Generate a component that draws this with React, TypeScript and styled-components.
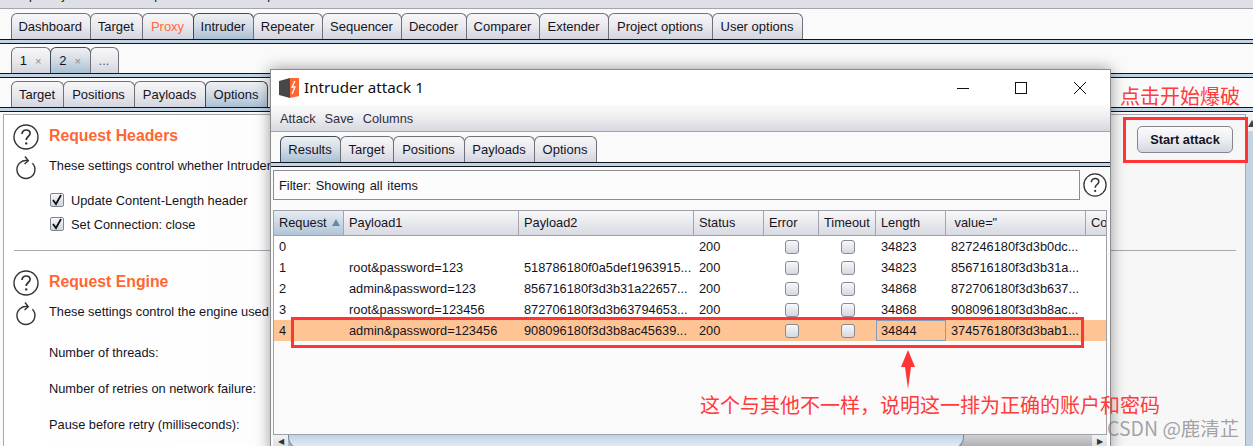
import React from "react";
import styled, { createGlobalStyle } from "styled-components";

const GlobalStyle = createGlobalStyle`
  html, body {
    margin: 0;
    padding: 0;
    background: #fafafb;
  }
  #root {
    width: 1253px;
    height: 446px;
    overflow: hidden;
  }
`;

const ui = `"Liberation Sans", Arial, sans-serif`;
const cjk = `"Noto Sans CJK SC", "Noto Sans", sans-serif`;
const ink = "#14141e";

const Page = styled.div`
  position: relative;
  width: 1253px;
  height: 446px;
  overflow: hidden;
  display: flex;
  flex-direction: column;
  font-family: ${ui};
  font-size: 12.8px;
  color: ${ink};
  background: #fafafb;
`;

const MenuStrip = styled.div`
  flex: none;
  height: 9px;
  box-sizing: border-box;
  overflow: hidden;
  display: flex;
  gap: 6px;
  padding-left: 9px;
  background: #dfe0e7;
  border-bottom: 1px solid #a4a4ac;
  line-height: 14px;
  & > span {
    margin-top: -12px;
  }
`;

const TabRow = styled.div<{ $top: number; $left?: number }>`
  flex: none;
  display: flex;
  height: 26px;
  margin-top: ${(p) => p.$top}px;
  padding-left: ${(p) => p.$left ?? 11}px;
`;

const Tab = styled.div<{ $w: number; $active?: boolean; $hot?: boolean; $muted?: boolean }>`
  flex: none;
  box-sizing: border-box;
  width: ${(p) => p.$w}px;
  height: 26px;
  display: flex;
  align-items: center;
  justify-content: center;
  gap: 8px;
  padding-right: 1px;
  font-size: 13px;
  white-space: nowrap;
  border: 1px solid #6f7078;
  border-bottom: none;
  border-radius: 6px 6px 0 0;
  margin-right: -1px;
  color: ${(p) => (p.$hot ? "#ff6a3d" : p.$muted ? "#5a5a66" : ink)};
  background: ${(p) =>
    p.$active
      ? "linear-gradient(#eef0f3 0%, #d5dde6 45%, #a9c0d4 100%)"
      : "linear-gradient(#f7f7f9 0%, #e9e9ee 50%, #d3d5de 100%)"};
  border-color: ${(p) => (p.$active ? "#3d4a58" : "#6f7078")};
`;

const CloseMark = styled.span`
  color: #8a8a92;
  font-size: 11px;
`;

const Rule = styled.div`
  flex: none;
  height: 5px;
  box-sizing: border-box;
  border-top: 1px solid #10141c;
  border-bottom: 1px solid #10141c;
  background: #c2d3e4;
`;

const Panel = styled.div`
  flex: 1;
  margin: 2px 0 0 3px;
  display: flex;
  min-height: 0;
`;

const PanelBody = styled.div`
  flex: 1;
  box-sizing: border-box;
  border: 1px solid #a8a8b0;
  border-bottom: none;
  padding: 9px 9px 0 9px;
  background: linear-gradient(90deg, #ffffff, #f6f6f7);
  white-space: nowrap;
`;

const SideBar = styled.div`
  flex: none;
  width: 7px;
  background: linear-gradient(#f2f2f4 0 17px, #c3d3e2 17px);
  overflow: hidden;
`;

const SideArrow = styled.span`
  display: block;
  width: 0;
  height: 0;
  margin: 6px 0 0 2px;
  border-left: 4px solid transparent;
  border-right: 4px solid transparent;
  border-bottom: 7px solid #444;
`;

const HeadRow = styled.div`
  display: flex;
  align-items: center;
  gap: 10px;
  height: 26px;
`;

const Heading = styled.h2`
  flex: 1;
  margin: 0 0 2px;
  font-size: 15.8px;
  font-weight: 700;
  color: #ff6633;
`;

const StartButton = styled.button`
  flex: none;
  width: 96px;
  height: 27px;
  margin: 2px 3px 0 0;
  align-self: flex-start;
  font-family: ${ui};
  font-size: 12.8px;
  font-weight: 700;
  color: ${ink};
  border: 1px solid #85858e;
  border-radius: 5px;
  background: linear-gradient(#fbfbfc, #eceef2 50%, #d3d6e0);
`;

const DescRow = styled.div`
  display: flex;
  align-items: center;
  gap: 12px;
  height: 26px;
  margin-top: 2px;
  padding-left: 2px;
`;

const Options = styled.div`
  margin: 10px 0 0 36px;
  display: flex;
  flex-direction: column;
`;

const CheckRow = styled.label`
  display: flex;
  align-items: center;
  gap: 7px;
  height: 24px;
`;

const CheckMark = styled.span`
  flex: none;
  box-sizing: border-box;
  width: 14px;
  height: 14px;
  margin-left: 1px;
  display: flex;
  align-items: center;
  justify-content: center;
  border: 1px solid #7d8691;
  border-radius: 2px;
  background: linear-gradient(#f6f7f9, #cfd6e0);
`;

const FieldRow = styled.div`
  height: 36px;
  display: flex;
  align-items: center;
`;

const Divider = styled.hr`
  margin: 14px 0 19px 1px;
  border: none;
  border-top: 1px solid #a8a8b2;
`;

const Window = styled.div`
  position: absolute;
  left: 270px;
  top: 69px;
  width: 841px;
  height: 384px;
  box-sizing: border-box;
  display: flex;
  flex-direction: column;
  background: #fafafb;
  border: 1px solid #8c8c90;
  box-shadow: 0 0 14px rgba(0, 0, 0, 0.4);
`;

const TitleBar = styled.div`
  flex: none;
  height: 35px;
  display: flex;
  align-items: center;
  padding: 0 1px 0 8px;
  background: #fff;
`;

const TitleText = styled.span`
  flex: 1;
  margin: 0 0 1px 5px;
  font-family: "Noto Sans", sans-serif;
  font-size: 15.2px;
  color: #111;
`;

const WindowButton = styled.span`
  flex: none;
  width: 58.5px;
  height: 35px;
  display: flex;
  align-items: center;
  justify-content: center;
`;

const MenuBar = styled.div`
  flex: none;
  height: 26px;
  display: flex;
  align-items: center;
  gap: 9px;
  padding-left: 9px;
  border-bottom: 1px solid #a4a4ac;
  background: linear-gradient(#fbfbfc, #f0f0f3 40%, #d6d8e0);
  color: #30303c;
`;

const FilterRow = styled.div`
  flex: none;
  display: flex;
  align-items: center;
  height: 30px;
  margin: 3px 3px 0 2px;
  gap: 3px;
`;

const FilterBox = styled.div`
  flex: 1;
  box-sizing: border-box;
  height: 30px;
  display: flex;
  align-items: center;
  padding-left: 5px;
  word-spacing: 1.25px;
  border: 1px solid #8c8c90;
  background: #fcfcfd;
`;

const ResultTable = styled.div`
  flex: none;
  width: 834px;
  height: 224px;
  box-sizing: border-box;
  margin: 10px 0 0 2px;
  border-left: 1px solid #a0a0a8;
  border-right: 1px solid #a0a0a8;
  overflow: hidden;
`;

const columns = "70px 175px 175px 70px 55px 57px 70px 140px 20px";

const HeaderRow = styled.div`
  display: grid;
  grid-template-columns: ${columns};
  height: 26px;
  box-sizing: border-box;
  border-top: 1px solid #a0a0a8;
  border-bottom: 1px solid #a0a0a8;
`;

const HeaderCell = styled.div<{ $sorted?: boolean }>`
  display: flex;
  align-items: center;
  gap: 5px;
  padding: 0 0 2px 5px;
  overflow: hidden;
  white-space: nowrap;
  border-right: 1px solid #a4a4ac;
  background: ${(p) =>
    p.$sorted
      ? "linear-gradient(#e6ebf0, #b1c5d8)"
      : "linear-gradient(#f8f8fa, #d8dae2)"};
  &:last-child {
    border-right: none;
  }
`;

const SortArrow = styled.span`
  width: 0;
  height: 0;
  border-left: 4px solid transparent;
  border-right: 4px solid transparent;
  border-bottom: 7px solid #5f8ab4;
`;

const Row = styled.div<{ $hit?: boolean }>`
  display: grid;
  grid-template-columns: ${columns};
  height: 21px;
  background: ${(p) => (p.$hit ? "#ffc494" : "#fff")};
`;

const Cell = styled.div<{ $focus?: boolean }>`
  box-sizing: border-box;
  display: flex;
  align-items: center;
  padding-left: ${(p) => (p.$focus ? 4 : 5)}px;
  overflow: hidden;
  white-space: nowrap;
  border: ${(p) => (p.$focus ? "1px solid #7f9fbf" : "none")};
`;

const CheckCell = styled.div`
  display: flex;
  align-items: center;
  justify-content: center;
`;

const TableBox = styled.span`
  box-sizing: border-box;
  width: 14px;
  height: 14px;
  border: 1px solid #868c96;
  border-radius: 3px;
  background: linear-gradient(#f8f8fa, #d5d8e0);
`;

const ScrollBar = styled.div`
  flex: none;
  width: 834px;
  height: 15px;
  margin-left: 2px;
  box-sizing: border-box;
  display: flex;
  border-top: 1px solid #a0a0a8;
  background: linear-gradient(#d0d0d4, #a8a8ae);
`;

const ScrollButton = styled.span`
  flex: none;
  width: 15px;
  display: flex;
  justify-content: center;
  padding-top: 3px;
  background: linear-gradient(#f2f2f4, #d8dae0);
  color: #333;
  font-size: 8px;
  line-height: 8px;
`;

const ScrollThumb = styled.span`
  flex: none;
  width: 674px;
  border: 1px solid #6d8aa6;
  border-top: none;
  border-radius: 0 0 12px 12px;
  background: linear-gradient(#bed3e6, #e8eff6);
`;

const ScrollGap = styled.span`
  flex: 1;
`;

const RedBox = styled.div<{ $x: number; $y: number; $w: number; $h: number }>`
  position: absolute;
  left: ${(p) => p.$x}px;
  top: ${(p) => p.$y}px;
  width: ${(p) => p.$w}px;
  height: ${(p) => p.$h}px;
  box-sizing: border-box;
  border: 3px solid #ff3535;
  pointer-events: none;
`;

const Note = styled.div<{ $x: number; $y: number }>`
  position: absolute;
  left: ${(p) => p.$x}px;
  top: ${(p) => p.$y}px;
  font-family: ${cjk};
  font-size: 20px;
  line-height: 24px;
  color: #ff3b3b;
  white-space: nowrap;
`;

const Watermark = styled.div`
  position: absolute;
  left: 1107px;
  top: 416px;
  font-family: ${cjk};
  font-size: 19.5px;
  line-height: 24px;
  color: rgba(120, 120, 125, 0.68);
  white-space: nowrap;
`;

const ArrowMark = styled.svg`
  position: absolute;
  left: 900px;
  top: 350px;
`;

const HelpIcon: React.FC<{ size?: number }> = ({ size = 26 }) => (
  <svg width={size} height={size} viewBox="0 0 26 26" style={{ flex: "none" }}>
    <circle cx="13" cy="13" r="12" fill="#fff" stroke="#333" strokeWidth="1.4" />
    <path
      d="M9 10c0-2.6 1.9-4 4.1-4 2.3 0 4 1.4 4 3.5 0 3-3.9 3-3.9 6.4"
      fill="none"
      stroke="#333"
      strokeWidth="1.7"
    />
    <circle cx="13.2" cy="19.4" r="1.2" fill="#333" />
  </svg>
);

const RefreshIcon = () => (
  <svg width="22" height="28" viewBox="0 0 22 28" style={{ flex: "none", marginTop: 4 }}>
    <path
      d="M17.4 10.2A9 9 0 1 1 13 7.7"
      fill="none"
      stroke="#333"
      strokeWidth="1.4"
    />
    <path d="M10 3.5 13.3 7.7 9.5 11" fill="none" stroke="#333" strokeWidth="1.4" />
  </svg>
);

const BurpLogo = () => (
  <svg width="20" height="20" viewBox="0 0 20 20" style={{ flex: "none" }}>
    <path d="M0 3 11 0v20L0 17z" fill="#474747" />
    <path d="M11 0h9v18l-9 2z" fill="#ff6633" />
    <path d="M16 3l-3 6h3l-3 7" fill="none" stroke="#fff" strokeWidth="1.3" />
  </svg>
);

const Tick = () => (
  <svg width="12" height="12" viewBox="0 0 12 12">
    <path d="M2 6l3 4 5-9" fill="none" stroke="#111" strokeWidth="1.8" />
  </svg>
);

type ResultRow = {
  id: number;
  payload1: string;
  payload2: string;
  length: string;
  value: string;
};

const results: ResultRow[] = [
  { id: 0, payload1: "", payload2: "", length: "34823", value: "827246180f3d3b0dc..." },
  { id: 1, payload1: "root&password=123", payload2: "518786180f0a5def1963915...", length: "34823", value: "856716180f3d3b31a..." },
  { id: 2, payload1: "admin&password=123", payload2: "856716180f3d3b31a22657...", length: "34868", value: "872706180f3d3b637..." },
  { id: 3, payload1: "root&password=123456", payload2: "872706180f3d3b63794653...", length: "34868", value: "908096180f3d3b8ac..." },
  { id: 4, payload1: "admin&password=123456", payload2: "908096180f3d3b8ac45639...", length: "34844", value: "374576180f3d3bab1..." },
];

const mainTabs: [string, number][] = [
  ["Dashboard", 79.5],
  ["Target", 53.5],
  ["Proxy", 52],
  ["Intruder", 61],
  ["Repeater", 70],
  ["Sequencer", 80],
  ["Decoder", 66],
  ["Comparer", 74],
  ["Extender", 70],
  ["Project options", 105],
  ["User options", 91],
];

const attackTabs: [string, number][] = [
  ["Results", 61],
  ["Target", 54],
  ["Positions", 72],
  ["Payloads", 71],
  ["Options", 63],
];

const AttackWindow = () => (
  <Window>
    <TitleBar>
      <BurpLogo />
      <TitleText>Intruder attack 1</TitleText>
      <WindowButton>
        <svg width="12" height="12" viewBox="0 0 12 12">
          <path d="M0 6.5h12" stroke="#111" />
        </svg>
      </WindowButton>
      <WindowButton>
        <svg width="12" height="12" viewBox="0 0 12 12">
          <rect x=".5" y=".5" width="11" height="11" fill="none" stroke="#111" />
        </svg>
      </WindowButton>
      <WindowButton>
        <svg width="12" height="12" viewBox="0 0 12 12">
          <path d="M0 0l12 12M12 0 0 12" stroke="#111" />
        </svg>
      </WindowButton>
    </TitleBar>
    <MenuBar>
      <span>Attack</span>
      <span>Save</span>
      <span>Columns</span>
    </MenuBar>
    <TabRow $top={4} $left={9}>
      {attackTabs.map(([label, w], i) => (
        <Tab key={label} $w={w} $active={i === 0}>
          {label}
        </Tab>
      ))}
    </TabRow>
    <Rule />
    <FilterRow>
      <FilterBox>Filter: Showing all items</FilterBox>
      <HelpIcon size={24} />
    </FilterRow>
    <ResultTable>
      <HeaderRow>
        <HeaderCell $sorted>
          Request <SortArrow />
        </HeaderCell>
        <HeaderCell>Payload1</HeaderCell>
        <HeaderCell>Payload2</HeaderCell>
        <HeaderCell>Status</HeaderCell>
        <HeaderCell>Error</HeaderCell>
        <HeaderCell>Timeout</HeaderCell>
        <HeaderCell>Length</HeaderCell>
        <HeaderCell>&nbsp;value="</HeaderCell>
        <HeaderCell>Co</HeaderCell>
      </HeaderRow>
      {results.map((r) => (
        <Row key={r.id} $hit={r.id === 4}>
          <Cell>{r.id}</Cell>
          <Cell>{r.payload1}</Cell>
          <Cell>{r.payload2}</Cell>
          <Cell>200</Cell>
          <CheckCell>
            <TableBox />
          </CheckCell>
          <CheckCell>
            <TableBox />
          </CheckCell>
          <Cell $focus={r.id === 4}>{r.length}</Cell>
          <Cell>{r.value}</Cell>
          <Cell />
        </Row>
      ))}
    </ResultTable>
    <ScrollBar>
      <ScrollButton>◀</ScrollButton>
      <ScrollThumb />
      <ScrollGap />
      <ScrollButton>▶</ScrollButton>
    </ScrollBar>
  </Window>
);

const App: React.FC = () => (
  <Page>
    <GlobalStyle />
    <MenuStrip>
      <span>Burp</span>
      <span>Project</span>
      <span>Intruder</span>
      <span>Repeater</span>
      <span>Window</span>
      <span>Help</span>
    </MenuStrip>
    <TabRow $top={4}>
      {mainTabs.map(([label, w]) => (
        <Tab key={label} $w={w} $active={label === "Intruder"} $hot={label === "Proxy"}>
          {label}
        </Tab>
      ))}
    </TabRow>
    <Rule />
    <TabRow $top={3}>
      <Tab $w={40}>
        1 <CloseMark>×</CloseMark>
      </Tab>
      <Tab $w={41} $active>
        2 <CloseMark>×</CloseMark>
      </Tab>
      <Tab $w={29} $muted>
        ...
      </Tab>
    </TabRow>
    <Rule />
    <TabRow $top={3}>
      <Tab $w={53}>Target</Tab>
      <Tab $w={72}>Positions</Tab>
      <Tab $w={72}>Payloads</Tab>
      <Tab $w={63} $active>
        Options
      </Tab>
    </TabRow>
    <Rule />
    <Panel>
      <PanelBody>
        <section>
          <HeadRow>
            <HelpIcon />
            <Heading>Request Headers</Heading>
            <StartButton>Start attack</StartButton>
          </HeadRow>
          <DescRow>
            <RefreshIcon />
            These settings control whether Intruder
          </DescRow>
          <Options>
            <CheckRow>
              <CheckMark>
                <Tick />
              </CheckMark>
              Update Content-Length header
            </CheckRow>
            <CheckRow>
              <CheckMark>
                <Tick />
              </CheckMark>
              Set Connection: close
            </CheckRow>
          </Options>
        </section>
        <Divider />
        <section>
          <HeadRow>
            <HelpIcon />
            <Heading>Request Engine</Heading>
          </HeadRow>
          <DescRow>
            <RefreshIcon />
            These settings control the engine used
          </DescRow>
          <Options>
            <FieldRow>Number of threads:</FieldRow>
            <FieldRow>Number of retries on network failure:</FieldRow>
            <FieldRow>Pause before retry (milliseconds):</FieldRow>
          </Options>
        </section>
      </PanelBody>
      <SideBar>
        <SideArrow />
      </SideBar>
    </Panel>
    <AttackWindow />
    <Note $x={1120} $y={84}>点击开始爆破</Note>
    <RedBox $x={1123} $y={117} $w={125} $h={46} />
    <RedBox $x={291} $y={317} $w={793} $h={31} />
    <ArrowMark width="16" height="39" viewBox="0 0 16 39">
      <polygon points="8,0 15,17 11,17 8,39 5,17 1,17" fill="#ff3535" />
    </ArrowMark>
    <Note $x={700} $y={393}>{"这个与其他不一样\uFF0C说明这一排为正确的账户和密码"}</Note>
    <Watermark>CSDN @鹿清芷</Watermark>
  </Page>
);

export default App;
